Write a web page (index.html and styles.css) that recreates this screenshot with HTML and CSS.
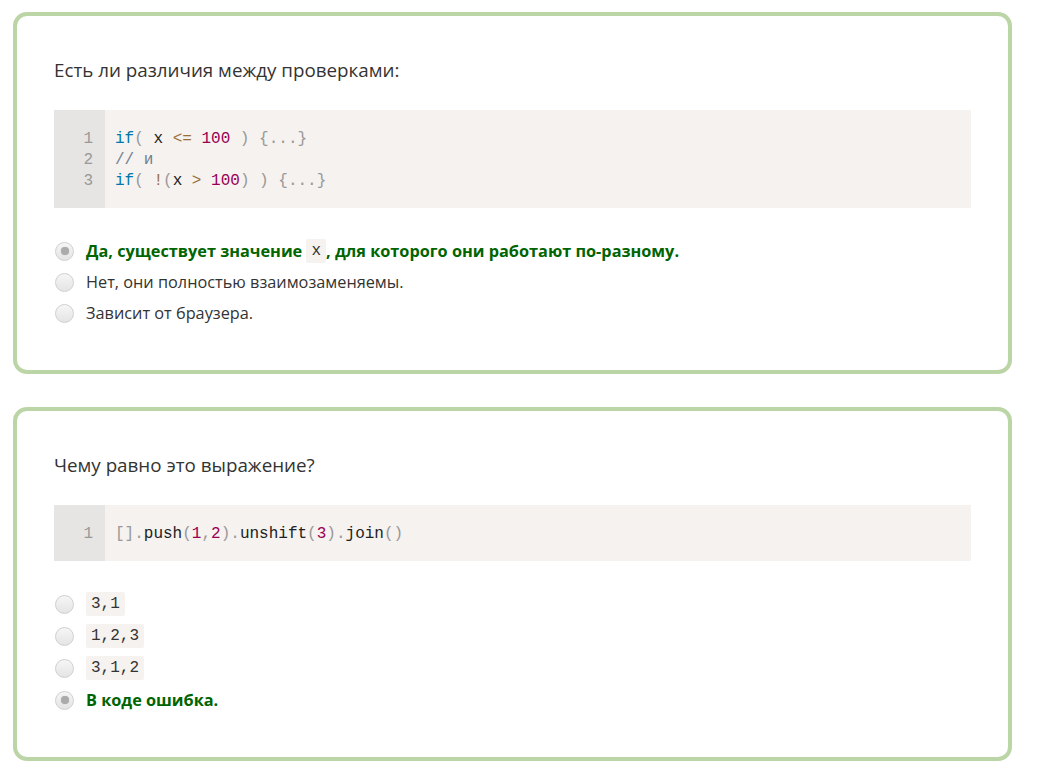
FILE: index.html
```html
<!DOCTYPE html>
<html lang="ru">
<head>
<meta charset="utf-8">
<title>Quiz</title>
<link rel="stylesheet" href="styles.css">
</head>
<body>
<div class="page">
  <section class="card">
    <p class="question">Есть ли различия между проверками:</p>
    <div class="code">
      <div class="gutter"><span>1</span><span>2</span><span>3</span></div>
      <pre class="lines"><span class="kw">if</span><span class="p">(</span> x <span class="op">&lt;=</span> <span class="num">100</span> <span class="p">)</span> <span class="p">{...}</span>
<span class="cm">// и</span>
<span class="kw">if</span><span class="p">(</span> <span class="op">!</span><span class="p">(</span>x <span class="op">&gt;</span> <span class="num">100</span><span class="p">)</span> <span class="p">)</span> <span class="p">{...}</span></pre>
    </div>
    <ul class="options">
      <li class="opt correct"><span class="radio checked"></span><span class="label">Да, существует значение <code class="chip">x</code>, для которого они работают по-разному.</span></li>
      <li class="opt"><span class="radio"></span><span class="label">Нет, они полностью взаимозаменяемы.</span></li>
      <li class="opt"><span class="radio"></span><span class="label">Зависит от браузера.</span></li>
    </ul>
  </section>

  <section class="card">
    <p class="question">Чему равно это выражение?</p>
    <div class="code">
      <div class="gutter"><span>1</span></div>
      <pre class="lines"><span class="p">[]</span><span class="p">.</span>push<span class="p">(</span><span class="num">1</span><span class="p">,</span><span class="num">2</span><span class="p">)</span><span class="p">.</span>unshift<span class="p">(</span><span class="num">3</span><span class="p">)</span><span class="p">.</span>join<span class="p">()</span></pre>
    </div>
    <ul class="options tall">
      <li class="opt"><span class="radio"></span><span class="label"><code class="chip">3,1</code></span></li>
      <li class="opt"><span class="radio"></span><span class="label"><code class="chip">1,2,3</code></span></li>
      <li class="opt"><span class="radio"></span><span class="label"><code class="chip">3,1,2</code></span></li>
      <li class="opt correct"><span class="radio checked"></span><span class="label">В коде ошибка.</span></li>
    </ul>
  </section>
</div>
</body>
</html>
```

FILE: styles.css
```css
html, body {
  margin: 0;
  padding: 0;
  background: #ffffff;
}

body {
  font-family: "Open Sans", "Noto Sans", sans-serif;
  color: #333333;
}

.page {
  display: flex;
  flex-direction: column;
  gap: 33px;
  padding: 12px 0 0 13px;
  width: 999px;
}

.card {
  border: 4px solid #bcd5a6;
  border-radius: 14px;
  padding: 0 37px 45px 37px;
  background: #ffffff;
}

.question {
  margin: 0;
  padding-top: 42px;
  font-size: 18.8px;
  line-height: 24px;
  color: #333333;
}

.code {
  display: flex;
  margin-top: 28px;
  background: #f5f2f0;
}

.gutter {
  display: flex;
  flex-direction: column;
  align-items: flex-end;
  width: 51px;
  box-sizing: border-box;
  padding: 19px 12px 16px 0;
  background: #e6e5e3;
  font-family: "Liberation Mono", "DejaVu Sans Mono", monospace;
  font-size: 16px;
  line-height: 21px;
  color: #999999;
}

.lines {
  margin: 0;
  padding: 19px 10px 16px 10px;
  font-family: "Liberation Mono", "DejaVu Sans Mono", monospace;
  font-size: 16px;
  line-height: 21px;
  color: #222222;
}

.kw { color: #0077aa; }
.p { color: #999999; }
.op { color: #9a6e3a; }
.num { color: #990055; }
.cm { color: #708090; }

.options {
  list-style: none;
  margin: 31px 0 0 0;
  padding: 0;
  display: flex;
  flex-direction: column;
  gap: 7px;
}

.options.tall {
  gap: 8px;
}

.opt {
  display: flex;
  align-items: center;
  gap: 12px;
  font-size: 16.3px;
  line-height: 24px;
  color: #333333;
}

.opt.correct {
  color: #006400;
  font-weight: bold;
}

.label {
  display: block;
  height: 24px;
}

.radio {
  width: 17px;
  height: 17px;
  flex: none;
  margin-left: 1px;
  border-radius: 50%;
  border: 1px solid #d0d0d0;
  background: linear-gradient(#f6f6f6, #e4e4e4);
  position: relative;
}

.radio.checked::after {
  content: "";
  position: absolute;
  left: 4.5px;
  top: 4.5px;
  width: 8px;
  height: 8px;
  border-radius: 50%;
  background: #ababab;
  box-shadow: 0 0 1px #bbbbbb;
}

.chip {
  display: inline-block;
  vertical-align: top;
  background: #f5f2f0;
  padding: 0 5px;
  font-family: "Liberation Mono", "DejaVu Sans Mono", monospace;
  font-size: 16px;
  line-height: 24px;
  font-weight: normal;
  color: #333333;
  border-radius: 2px;
}
```
